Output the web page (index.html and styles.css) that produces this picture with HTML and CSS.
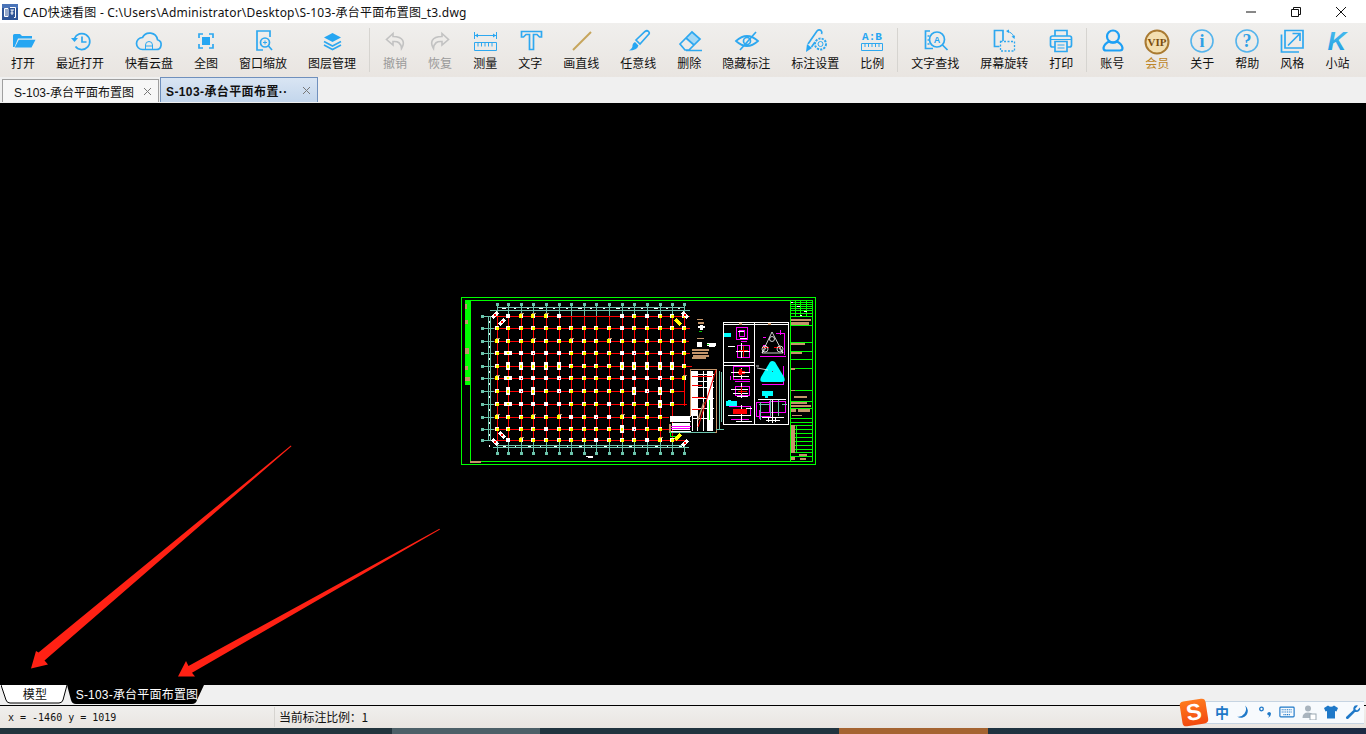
FILE: index.html
```html
<!DOCTYPE html>
<html lang="zh-CN">
<head>
  <meta charset="UTF-8" />
  <title>CAD快速看图</title>
  <link rel="stylesheet" href="styles.css">
</head>
<body>
  <div class="window">
    <!-- Title bar -->
    <div class="titlebar">
      <svg class="app-icon" viewBox="0 0 16 16">
        <rect width="16" height="16" fill="#2f5597"/>
        <rect x="0" y="0" width="16" height="4" fill="#4a74b8"/>
        <path d="M2.5 4.5h3.5v8H2.5z M4 4.5v8 M8 3.5h5.5v10H12 M8.5 6h3.5 M10 6v5 M8.5 9h3" fill="none" stroke="#fff" stroke-width="1"/>
      </svg>
      <span class="title-text">CAD快速看图 - C:\Users\Administrator\Desktop\S-103-承台平面布置图_t3.dwg</span>
      <div class="caption-btns">
        <div class="caption-btn"><svg viewBox="0 0 12 12"><path d="M1 6h10"/></svg></div>
        <div class="caption-btn"><svg viewBox="0 0 12 12"><path d="M1.5 3.5h7v7h-7z M3.5 3.5v-2h7v7h-2"/></svg></div>
        <div class="caption-btn"><svg viewBox="0 0 12 12"><path d="M1 1l10 10 M11 1L1 11"/></svg></div>
      </div>
    </div>

    <!-- Toolbar -->
    <div class="toolbar">
      <div class="tool">
        <svg class="icon" viewBox="0 0 28 28"><path class="solid" d="M4 20V8.5Q4 7 5.5 7H11l2 2h10v2.5H9L5.5 20z"/><path class="solid" d="M9.8 12.8H26.5L22.5 20.5H5.8z"/></svg>
        <span>打开</span>
      </div>
      <div class="tool">
        <svg class="icon" viewBox="0 0 28 28"><path class="bold" d="M8.4 11.5A8 8 0 1 1 9.5 19.5"/><path class="solid" d="M5 11h7l-3.500 4z"/><path class="bold" d="M16 9.500v5.500h4.500"/></svg>
        <span>最近打开</span>
      </div>
      <div class="tool">
        <svg class="icon" viewBox="0 0 28 28"><path class="bold" d="M7.500 22.500H21a5 5 0 0 0 1.500-9.800a8 8 0 0 0-15-2.200a6 6 0 0 0 0 12z"/><path d="M10.500 22v-4a3.500 3.500 0 0 1 7 0v4 M10.500 19h7"/></svg>
        <span>快看云盘</span>
      </div>
      <div class="tool">
        <svg class="icon" viewBox="0 0 28 28"><path class="bold" d="M7 11V7h4 M17 7h4v4 M21 17v4h-4 M11 21H7v-4"/><rect class="solid" x="10" y="10" width="8" height="8"/></svg>
        <span>全图</span>
      </div>
      <div class="tool">
        <svg class="icon" viewBox="0 0 28 28"><path class="bold" d="M21 10V4H8v19h6"/><circle class="bold" cx="16" cy="15.500" r="4.500"/><path d="M14 15.500h4 M16 13.500v4"/><path class="bold" d="M19.500 19l3.500 4"/></svg>
        <span>窗口缩放</span>
      </div>
      <div class="tool">
        <svg class="icon" viewBox="0 0 28 28"><path class="solid" d="M14.500 6L23 10.500 14.500 15 6 10.500z"/><path class="bold" d="M6 14.500l8.500 4.500 8.500-4.500 M6 18l8.500 4.500L23 18"/></svg>
        <span>图层管理</span>
      </div>
      <div class="tool-sep"></div>
      <div class="tool disabled">
        <svg class="icon grey" viewBox="0 0 28 28"><path d="M12 6.500L5.500 12.500 12 18V14.500C17 14 20 16 20.500 21.500C24 16 23 9.500 12 9.500z"/></svg>
        <span>撤销</span>
      </div>
      <div class="tool disabled">
        <svg class="icon grey" viewBox="0 0 28 28"><path d="M16 6.500L22.500 12.500 16 18V14.500C11 14 8 16 7.500 21.500C4 16 5 9.500 16 9.500z"/></svg>
        <span>恢复</span>
      </div>
      <div class="tool">
        <svg class="icon" viewBox="0 0 28 28"><path d="M3.500 5v7 M25.500 5v7 M4 8.500h21"/><path class="solid" d="M4 8.500l3-2v4z M25 8.500l-3-2v4z"/><path d="M3.500 15.500h22v8h-22z M7 15.500v4 M10.500 15.500v4 M14 15.500v4 M17.500 15.500v4 M21 15.500v4"/></svg>
        <span>测量</span>
      </div>
      <div class="tool">
        <svg class="icon" viewBox="0 0 28 28"><path class="bold" d="M5.500 4.500H25.500V10H23.500L21 7.500H17.500V22.500H13.500V7.500H10L7.500 10H5.500z"/></svg>
        <span>文字</span>
      </div>
      <div class="tool">
        <svg class="icon" viewBox="0 0 28 28"><path class="gold-line" d="M6 23L24 5"/></svg>
        <span>画直线</span>
      </div>
      <div class="tool">
        <svg class="icon" viewBox="0 0 28 28"><path class="bold" d="M12 13L21 4.500Q23 3 24.500 4.500Q26 6 24.500 7.500L16 17z"/><path class="solid" d="M11 15L14.500 18.500Q13 23.500 5 23.500Q9 21 8.500 18Q9 16 11 15z"/></svg>
        <span>任意线</span>
      </div>
      <div class="tool">
        <svg class="icon" viewBox="0 0 28 28"><path class="pale" d="M11 11L17 5L25 12L19 18z"/><path class="bold" d="M5 17L17 5L25 12L14 23H10z M11 11L19 18 M11 23.500H27"/></svg>
        <span>删除</span>
      </div>
      <div class="tool">
        <svg class="icon" viewBox="0 0 28 28"><path class="bold" d="M4 14Q15 4 26 14Q15 24 4 14z"/><circle class="bold" cx="15" cy="14" r="3.500"/><path class="bold" d="M8 23L24 5"/></svg>
        <span>隐藏标注</span>
      </div>
      <div class="tool">
        <svg class="icon" viewBox="0 0 28 28"><path class="solid" d="M5 25L6 17L11 21z"/><path class="bold" d="M7 17L16 4Q18 2 20 3.500Q21.500 5 20.500 7 M10.500 20L14 15"/><circle class="gear" cx="19.500" cy="17" r="5.500"/><circle cx="19.500" cy="17" r="2.500"/></svg>
        <span>标注设置</span>
      </div>
      <div class="tool">
        <svg class="icon" viewBox="0 0 28 28"><text class="icon-text" x="14" y="12.500" text-anchor="middle">A:B</text><path d="M3.500 16.500h21v7h-21z M7 16.500v3.500 M10.500 16.500v3.500 M14 16.500v3.500 M17.500 16.500v3.500 M21 16.500v3.500"/></svg>
        <span>比例</span>
      </div>
      <div class="tool-sep"></div>
      <div class="tool">
        <svg class="icon" viewBox="0 0 28 28"><path class="bold" d="M9 4H4.500V21.500H12 M6.500 9h2 M6.500 13h2 M6.500 17h2"/><circle class="bold" cx="16" cy="12.500" r="7.500"/><text class="icon-text small" x="16" y="16" text-anchor="middle">A</text><path class="bold" d="M21.500 18l5 5"/></svg>
        <span>文字查找</span>
      </div>
      <div class="tool">
        <svg class="icon" viewBox="0 0 28 28"><path class="bold" d="M9.500 19.500H4.500V3.500H13V14"/><path class="dashed" d="M10.500 14.500h14v9.500h-14z"/><path d="M17 4.500Q22 5 24 10"/><path class="solid" d="M24.500 12l-3-2.500 3.500-1z M16 4l3-1.500v3.500z"/></svg>
        <span>屏幕旋转</span>
      </div>
      <div class="tool">
        <svg class="icon" viewBox="0 0 28 28"><path class="bold" d="M8 9V3.500H20V9 M8 20H5.500Q3.500 20 3.500 18V11Q3.500 9 5.500 9H22.500Q24.500 9 24.500 11V18Q24.500 20 22.500 20H20"/><path class="bold" d="M8 14.500H20V24.500H8z"/><path d="M10.500 18h7 M10.500 21h7 M4 12.500h20"/></svg>
        <span>打印</span>
      </div>
      <div class="tool-sep"></div>
      <div class="tool">
        <svg class="icon user" viewBox="0 0 28 28"><circle cx="15" cy="9.500" r="6"/><path d="M5.500 21C6 17.500 9 15.500 11 14.500C13 16 17 16 19 14.500C21 15.500 24 17.500 24.500 21Q24.500 23.500 22 23.500H8Q5.500 23.500 5.500 21z"/></svg>
        <span>账号</span>
      </div>
      <div class="tool vip">
        <svg class="icon" viewBox="0 0 28 28"><circle class="vip-ring" cx="14" cy="15" r="11.500"/><text class="vip-text" x="14" y="18.500" text-anchor="middle">VIP</text></svg>
        <span>会员</span>
      </div>
      <div class="tool">
        <svg class="icon" viewBox="0 0 28 28"><circle class="soft" cx="14" cy="14" r="11"/><text class="circle-text" x="14" y="20" text-anchor="middle">i</text></svg>
        <span>关于</span>
      </div>
      <div class="tool">
        <svg class="icon" viewBox="0 0 28 28"><circle class="soft" cx="14" cy="14" r="11"/><text class="circle-text" x="14" y="20" text-anchor="middle">?</text></svg>
        <span>帮助</span>
      </div>
      <div class="tool">
        <svg class="icon" viewBox="0 0 28 28"><path class="bold" d="M7 3.500H25V21H7z M3.500 7.500V25H21"/><path class="bold" d="M10 18.500L21.500 7 M14.500 6.500H22V14"/></svg>
        <span>风格</span>
      </div>
      <div class="tool">
        <svg class="icon" viewBox="0 0 28 28">
          <defs><linearGradient id="kfill" x1="0" y1="0" x2="0" y2="1"><stop offset="0" stop-color="#4fc0f0"/><stop offset="1" stop-color="#1c9ae0"/></linearGradient></defs>
          <text class="k-text" x="14" y="23" text-anchor="middle" fill="url(#kfill)">K</text>
        </svg>
        <span>小站</span>
      </div>
    </div>

    <!-- Document tabs -->
    <div class="doc-tabs">
      <div class="doc-tab">
        <span>S-103-承台平面布置图</span>
        <svg class="tab-close" viewBox="0 0 9 9"><path d="M1 1l7 7 M8 1L1 8"/></svg>
      </div>
      <div class="doc-tab active">
        <span>S-103-承台平面布置··</span>
        <svg class="tab-close" viewBox="0 0 9 9"><path d="M1 1l7 7 M8 1L1 8"/></svg>
      </div>
    </div>

    <!-- Drawing area, coordinates are window pixels -->
    <div class="canvas">
      <svg class="sheet" viewBox="0 103 1366 582" width="1366" height="582">
        <g class="crisp">
          <!-- frames -->
          <path class="g" d="M461.500 297.500H815.500V464.500H461.500z M470.500 300.500H812.500V461.500H470.500z"/>
          <rect x="465" y="300" width="5" height="85" fill="#0f0"/>
          <path class="tan" d="M465 304h2v5h-2z M465 320h3v4h-3z M465 348h4v6h-4z M465 366h3v4h-3z M465 377h5v4h-5z M470 461h11v2h-11z"/>
        </g>
        <g id="grid" class="crisp"></g>
        <g class="crisp">
          <!-- notes between plan and details -->
          <path class="tan" d="M697 319h6v1h-6z M698 322h6v2h-6z M692 349h17v2h-17z M692 352h16v2h-16z M693 355h16v2h-16z M692 357h14v2h-14z M697 338h7v1h-7z"/>
          <path class="w" d="M700 325h3v5h-3z M698 326h7v2h-7z M697 342h5v5h-5z M707 343h9v3h-9z M709 346h6v1h-6z"/>
          <path class="gr" d="M699 331h3v1h-3z M707 344h2v1h-2z"/>

          <!-- stair block -->
          <rect x="690" y="369" width="27" height="64" fill="#000"/>
          <path class="tan" d="M690 369h27v1h-27z M690 370h1v46h-1z M716 370h1v62h-1z M690 432h27v1h-27z"/>
          <path class="wl" d="M692 374.500H714 M692 381.500H714 M692 387.500H714 M692 398.500H714 M692 408.500H714 M692 418.500H714 M692 371V431 M697.500 371V431 M703.500 371V431 M712.500 371V431 M669.500 416.500H691 M669.500 421.500H691 M669.500 431.500H691"/>
          <path class="w" d="M691 371h6v45h-6z M707 371h5v60h-5z"/>
          <path class="rl" d="M692 376.500H712 M692 385.500H702 M692 397.500H705 M692 409.500H700"/>
          <path class="tl" d="M719.500 371V429 M721.500 372V422 M669 432.500H715 M716 429.500H724"/>
          <path class="gl" d="M670.500 425V437 M670 436.500H676 M709.500 400V420"/>
          <rect x="670" y="417" width="20" height="4" fill="#fff"/>
          <rect x="672" y="423" width="18" height="7" fill="#fff"/>
          <path class="ml" d="M671 426.500H691 M671 428.500H690"/>
          <rect x="669" y="424" width="2" height="8" fill="#c4956a"/>
        </g>
        <path class="red-thin" d="M716 370L698 427"/>
        <path class="tan-thin" d="M704 402L698 420"/>

        <g class="crisp">
          <!-- detail panel -->
          <path class="w" d="M723 322h66v1h-66z M723 324h66v1h-66z M723 322h1v103h-1z M788 322h1v103h-1z M723 424h66v1h-66z M754 322h1v103h-1z M723 362h32v1h-32z M723 365h32v1h-32z"/>
          <path class="c" d="M724 333h7v4h-7z M726 401h11v5h-11z M728 400h3v2h-3z M762 391h11v5h-11z M765 395h3v3h-3z"/>
          <path class="tan" d="M739 323h3v2h-3z M768 323h3v2h-3z"/>
          <path class="ml" d="M736.500 327.500h11v12h-11z M739.500 330.500h5v6h-5z M737.500 345.500h12v12h-12z M733 372.500h16v-6h-16z M733.500 367v12.500h16.500 M735 386.500h14v9h-14z M729 406.500h21v8 M731 419.500h18 M760 356.500h26 M784.500 333v22 M776 333h9 M762 384.500h22 M783.500 366v18 M756.500 402.500h14v14h-14z M769.500 401.500h16v11h-16z M759 410v9 M760.500 412.500h24 M741 341.500h6 M735 381.500h15 M730 376v4 M763 337h3 M763 345h3 M780 330v5"/>
          <path class="wl" d="M738 331.500h6 M740 338.500h7 M728 346.500h7 M736 351.500h14 M741.500 343v15 M731 372.500h19 M741.500 368v11 M731 389.500h17 M737 396.500h11 M741.500 383v15 M728 415.500h23 M741.500 405v16 M736 421.500h16 M758 399.500h28 M772.500 399v24 M762 417.500h22 M766 420.500h14 M733 393.500h15 M746 408.500h6 M733 376.500h16 M775 418v4 M768 418v4"/>
          <path class="rl" d="M739 350.500h9 M743.500 346v11 M738 373.500h7 M738 371.500h7 M738 391.500h9 M741.500 387v7 M762 347.500h7 M774 347.500h7"/>
          <rect x="733" y="409" width="14" height="5" fill="#f00"/>
          <rect x="739" y="369" width="3" height="6" fill="#f00"/>
          <path class="tl" d="M759 404.500h12 M760.500 402V420 M770.500 400V416 M778.500 400V416 M782 404.500h5"/>
        </g>
        <path class="wire" d="M772 332L762 353H783z M762 353l4 -5 M783 353l-4 -5"/>
        <circle class="wire" cx="765" cy="349" r="3"/>
        <circle class="wire" cx="780" cy="349" r="3"/>
        <circle class="wire" cx="772" cy="339" r="2.500"/>
        <path class="cyan-fill" d="M770 362Q772 360 775 362L784 377Q786 382 782 382H763Q759 382 761 377z"/>
        <path class="dark-mark" d="M772 371h1v1h-1z"/>
        <path class="wire" d="M757 368L768 370 M756 366h3"/>

        <g class="crisp">
          <!-- title block -->
          <path class="gl" d="M790.500 300V461.500 M790.500 302.500H812 M790.500 304.500H812 M790.500 306.500H812 M790.500 308.500H812 M790.500 310.500H812 M790.500 313.500H812 M790.500 316.500H812 M795.500 301V317 M800.500 301V317 M806.500 301V317 M790.500 325.500H812 M790.500 342.500H812 M790.500 351.500H812 M790.500 359.500H812 M790.500 368.500H812 M790.500 390.500H812 M790.500 401.500H812 M790.500 408.500H812 M790.500 418.500H812 M790.500 422.500H812 M790.500 425.500H812 M796.500 425V452 M790.500 429.500H812 M790.500 433.500H812 M790.500 437.500H812 M790.500 441.500H812 M790.500 445.500H812 M790.500 449.500H812 M790.500 452.500H812 M790.500 456.500H812"/>
          <path class="tan" d="M791 319h20v2h-20z M791 322h18v3h-18z M791 343h14v2h-14z M791 352h11v2h-11z M791 368h4v2h-4z M791 390h4v1h-4z M794 396h13v2h-13z M791 402h16v2h-16z M791 405h20v2h-20z M791 409h5v3h-5z M798 409h12v3h-12z M792 415h10v1h-10z M791 425h4v28h-4z M799 454h8v2h-8z M791 457h4v3h-4z M800 458h6v2h-6z"/>
          <path class="w" d="M791 302h2v1h-2z M797 306h3v1h-3z M804 311h3v1h-3z M800 315h2v1h-2z"/>
        </g>

        <!-- annotation arrows -->
        <path class="arrow" d="M291.500 446.300L290.800 445.600L38.500 652.500L36 651L31 668.500L48 664.500L44.500 660.500z"/>
        <path class="arrow" d="M440 529.600L439.400 528.800L188.500 666L186 661L178 676.500L195 676.500L192 672.800z"/>
      </svg>
    </div>

    <!-- Sheet tabs -->
    <div class="sheet-tabs">
      <div class="sheet-tab model">
        <svg class="tab-shape" viewBox="0 0 66 20" preserveAspectRatio="none"><path d="M0 0L5 15Q6 18 9 18H58Q61 18 62 15L66 0" fill="#fff" stroke="#000"/></svg>
        <span>模型</span>
      </div>
      <div class="sheet-tab layout">
        <svg class="tab-shape" viewBox="0 0 137 20" preserveAspectRatio="none"><path d="M0 0L4 15Q5 19 9 19H125Q129 19 130 15L137 0z" fill="#000"/></svg>
        <span>S-103-承台平面布置图</span>
      </div>
    </div>

    <!-- Status bar -->
    <div class="statusbar">
      <div class="coords">x = -1460 y = 1019</div>
      <div class="scale">当前标注比例：1</div>
    </div>

    <!-- Desktop peeking out under the window -->
    <div class="desktop">
      <div class="seg-a"></div>
      <div class="seg-b"></div>
      <div class="seg-c"></div>
      <div class="seg-d"></div>
      <div class="seg-e"></div>
    </div>

    <!-- Sogou input method bar, floats over the window -->
    <div class="ime">
      <div class="ime-logo"><span>S</span></div>
      <div class="ime-bar">
        <span class="ime-zh">中</span>
        <svg viewBox="0 0 16 16"><path class="ime-solid" d="M10 1.500A6.500 6.500 0 0 1 2 12.500A7.500 7.500 0 0 0 10 1.500z"/></svg>
        <svg viewBox="0 0 16 16"><circle class="ime-line" cx="4.500" cy="5" r="1.800"/><path class="ime-solid" d="M11 8.500a1.800 1.800 0 0 1 3 1.200Q14 12.500 11 14Q12.500 12 11.800 11.300A1.500 1.500 0 0 1 11 8.500z"/></svg>
        <svg viewBox="0 0 18 16"><rect class="ime-line" x="1" y="2.500" width="16" height="11" rx="1"/><path class="ime-dots" d="M3 5.500h12 M3 8h12 M5 11h8"/></svg>
        <svg viewBox="0 0 16 16"><circle class="ime-grey" cx="7" cy="4.500" r="3"/><path class="ime-grey" d="M1.500 14Q1.500 8.500 7 8.500Q11 8.500 12 11V14z"/><rect x="9" y="10" width="6" height="6" fill="#fff" stroke="#9aa7b2"/></svg>
        <svg viewBox="0 0 16 16"><path class="ime-solid" d="M5 1.500L1 4l1.500 3.500L4 7v7.500h8V7l1.500.5L15 4l-4-2.500Q8 4 5 1.500z"/></svg>
        <svg viewBox="0 0 16 16"><path class="ime-solid" d="M15 3.500L12 6.500 10 5l3-3.500Q9.500.5 8.500 3.500Q8 5 8.500 6L1 13Q.5 15 3 15L10 8Q13 8.500 14.500 6.500Q15.500 5 15 3.500z"/></svg>
      </div>
    </div>
  </div>
  <script src="drawing.js"></script>
</body>
</html>
```

FILE: styles.css
```css
* {
  box-sizing: border-box;
}

html, body {
  margin: 0;
  height: 100%;
  overflow: hidden;
}

body {
  font-family: "Noto Sans CJK SC", "Noto Sans", sans-serif;
  font-size: 12px;
  color: #111;
  background: #000;
}

.window {
  position: relative;
  display: flex;
  flex-direction: column;
  width: 1366px;
  height: 734px;
}

/* title bar */
.titlebar {
  display: flex;
  align-items: center;
  height: 23px;
  padding-left: 2px;
  background: #fff;
}

.app-icon {
  width: 16px;
  height: 16px;
}

.title-text {
  margin-left: 5px;
  font-family: "Noto Sans", "Noto Sans CJK SC", sans-serif;
  font-size: 12px;
  letter-spacing: 0.22px;
  white-space: nowrap;
}

.caption-btns {
  display: flex;
  margin-left: auto;
  margin-right: 3px;
}

.caption-btn {
  display: flex;
  align-items: center;
  justify-content: center;
  width: 45px;
  height: 21px;
}

.caption-btn svg {
  width: 12px;
  height: 12px;
  fill: none;
  stroke: #111;
  stroke-width: 1;
}

/* toolbar */
.toolbar {
  display: flex;
  height: 54px;
  padding: 4px 0 0 0.5px;
  background: linear-gradient(#f0efed, #e9e5e1);
}

.tool {
  display: flex;
  flex-direction: column;
  align-items: center;
  padding: 0 10.5px;
  white-space: nowrap;
}

.tool span {
  height: 16px;
  line-height: 16px;
}

.tool.disabled span {
  color: #9a9a9a;
}

.tool.vip span {
  color: #bd8527;
}

.tool-sep {
  width: 1px;
  height: 44px;
  margin: 1px 2.5px 0;
  background: #d6d4d0;
}

.icon {
  width: 28px;
  height: 28px;
  margin: 0 -2px;
  flex: none;
  fill: none;
  stroke: #2ea8f0;
  stroke-width: 1;
}

.icon .solid {
  fill: #26a6f2;
  stroke: none;
}

.icon .bold {
  stroke-width: 1.7;
}

.icon .pale {
  fill: #a5d8f5;
  stroke: none;
}

.icon .dashed {
  stroke-dasharray: 2 1.5;
  stroke-width: 1.3;
}

.icon .gear {
  stroke-width: 2;
  stroke-dasharray: 2.2 1.1;
}

.icon .soft {
  stroke: #55b4ec;
  stroke-width: 1.6;
}

.icon .gold-line {
  stroke: #c6a55c;
  stroke-width: 2;
}

.icon.grey {
  stroke: #c2c2c2;
  stroke-width: 1.6;
}

.icon.user {
  stroke: #1ea0f5;
  stroke-width: 2.2;
}

.icon-text {
  font-family: "Liberation Mono", monospace;
  font-size: 11px;
  font-weight: bold;
  fill: #26a6f2;
  stroke: none;
}

.icon-text.small {
  font-family: "Liberation Sans", sans-serif;
  font-size: 9px;
}

.circle-text {
  font-family: "Liberation Serif", serif;
  font-size: 18px;
  font-weight: bold;
  fill: #2ea0e6;
  stroke: none;
}

.vip-ring {
  fill: #f3dfb0;
  stroke: #a97a32;
  stroke-width: 2;
}

.vip-text {
  font-family: "Liberation Serif", serif;
  font-size: 11px;
  font-weight: bold;
  fill: #7a4d0e;
  stroke: none;
}

.k-text {
  font-family: "Liberation Sans", sans-serif;
  font-size: 26px;
  font-weight: bold;
  font-style: italic;
  stroke: none;
}

/* document tabs */
.doc-tabs {
  display: flex;
  align-items: flex-end;
  gap: 1px;
  height: 26px;
  padding-left: 2px;
  padding-bottom: 1px;
  background: #f0f0f0;
}

.doc-tab {
  display: flex;
  align-items: center;
  justify-content: space-between;
  width: 157px;
  height: 23px;
  padding: 0 6px 0 11px;
  font-family: "Liberation Sans", "Noto Sans CJK SC", sans-serif;
  background: #f7f7f7;
  border: 1px solid #a0a0a0;
  border-bottom: none;
  white-space: nowrap;
}

.doc-tab.active {
  width: 158px;
  height: 25px;
  padding-left: 5px;
  font-weight: bold;
  letter-spacing: 0.4px;
  background: linear-gradient(#d9e5f3, #c3d6ec);
  border-color: #6f90bd;
}

.tab-close {
  width: 9px;
  height: 9px;
  flex: none;
  fill: none;
  stroke: #777;
  stroke-width: 1;
}

/* drawing */
.canvas {
  flex: 1;
  background: #000;
  overflow: hidden;
}

.sheet {
  display: block;
}

.crisp {
  shape-rendering: crispEdges;
}

.g {
  fill: none;
  stroke: #0f0;
}

.gl {
  fill: none;
  stroke: #0f0;
  stroke-width: 1;
}

.tan {
  fill: #c4956a;
}

.w {
  fill: #fff;
}

.gr {
  fill: #0c0;
}

.c {
  fill: #0ff;
}

.wl {
  fill: none;
  stroke: #fff;
}

.rl {
  fill: none;
  stroke: #f00;
}

.tl {
  fill: none;
  stroke: #6cc4ac;
}

.ml {
  fill: none;
  stroke: #f0f;
}

.wire {
  fill: none;
  stroke: #fff;
  stroke-width: 0.8;
}

.red-thin {
  stroke: #f00;
  stroke-width: 1;
}

.tan-thin {
  stroke: #c4956a;
  stroke-width: 1.5;
}

.cyan-fill {
  fill: #0ff;
}

.dark-mark {
  fill: #555;
}

.arrow {
  fill: #ff2114;
}

/* sheet tabs */
.sheet-tabs {
  display: flex;
  height: 21px;
  padding-left: 1px;
  background: #f0f0f0;
  border-bottom: 1px solid #000;
}

.sheet-tab {
  position: relative;
  display: flex;
  align-items: center;
  justify-content: center;
  height: 20px;
  padding-bottom: 3px;
}

.sheet-tab.model {
  width: 66px;
  padding-left: 2px;
}

.sheet-tab.layout {
  width: 137px;
  padding-left: 3px;
  color: #fff;
}

.sheet-tab span {
  position: relative;
  font-family: "Liberation Sans", "Noto Sans CJK SC", sans-serif;
  letter-spacing: 0.2px;
  white-space: nowrap;
}

.tab-shape {
  position: absolute;
  top: 0;
  left: 0;
  width: 100%;
  height: 100%;
}

/* status bar */
.statusbar {
  display: flex;
  align-items: center;
  height: 22px;
  padding-left: 8px;
  background: linear-gradient(#f0efed, #e9e5e1);
}

.coords {
  width: 266px;
  font-family: "DejaVu Sans Mono", monospace;
  font-size: 10px;
}

.scale {
  height: 20px;
  padding-left: 4px;
  line-height: 20px;
  letter-spacing: -0.2px;
  border-left: 1px solid #d6d4d0;
}

/* desktop strip */
.desktop {
  display: flex;
  height: 6px;
}

.seg-a { width: 392px; background: #22343d; }
.seg-b { width: 148px; background: #4d6068; }
.seg-c { width: 299px; background: #21343f; }
.seg-d { width: 149px; background: #a56431; }
.seg-e { flex: 1; background: linear-gradient(90deg, #1f3340, #1c2a44); }

/* input method bar */
.ime {
  position: absolute;
  left: 1180px;
  top: 698px;
  display: flex;
  align-items: center;
  width: 186px;
  height: 28px;
}

.ime-logo {
  position: relative;
  z-index: 1;
  display: flex;
  align-items: center;
  justify-content: center;
  flex: none;
  width: 26px;
  height: 25px;
  margin-left: 1px;
  font-family: "Liberation Sans", sans-serif;
  font-size: 23px;
  font-weight: bold;
  line-height: 1;
  color: #fff;
  background: linear-gradient(#ff7a1f, #f24a0f);
  border-radius: 4px;
  transform: rotate(-9deg);
}

.ime-bar {
  display: flex;
  align-items: center;
  gap: 6px;
  width: 159px;
  height: 23px;
  margin-left: -2px;
  padding-left: 9px;
  background: #f7fafd;
  border: 1px solid #c6d4e2;
  border-right: none;
}

.ime-bar svg {
  width: 16px;
  height: 16px;
  flex: none;
}

.ime-zh {
  font-size: 14px;
  font-weight: bold;
  line-height: 1;
  color: #1e78c8;
}

.ime-solid {
  fill: #1e78c8;
}

.ime-line {
  fill: none;
  stroke: #1e78c8;
  stroke-width: 1.3;
}

.ime-dots {
  fill: none;
  stroke: #1e78c8;
  stroke-width: 1.3;
  stroke-dasharray: 1.2 0.8;
}

.ime-grey {
  fill: #a9b4be;
}
```

FILE: drawing.js
```js
// Column grid of the foundation plan. Everything is in window pixels.
var xs = [497, 508, 521, 533, 546, 559, 571, 584, 596, 609, 622, 634, 647, 660, 672, 684];
var ys = [316, 328, 341, 353, 366, 378, 391, 404, 417, 429, 440];

// one char per column: . none, y yellow, c yellow with tan, w white, o white with dot,
// t tall white, h wide white
var rows = [
  '.wcccw....wywyyy',
  'yyyyyyyyyywyyyyy',
  'cyycyycyycyyyyyy',
  'yhwowwyyyywoywyy',
  'ytttttyyyyttttty',
  'chowwoyyyywwwoyc',
  'ytotyoyyyyytoty.',
  'yhwwwwyyywyyyty.',
  'cyycycwyowcyyy..',
  'yyyywyyyyytoyy..',
  '.wcyyyyywyyywcy.'
];

var hEnds = [690, 690, 689, 690, 692, 686, 685, 687, 669, 669, 685];

function el(tag, attrs) {
  var node = document.createElementNS('http://www.w3.org/2000/svg', tag);
  for (var k in attrs) node.setAttribute(k, attrs[k]);
  document.getElementById('grid').appendChild(node);
}

function box(x, y, w, h, fill) {
  el('rect', { x: x, y: y, width: w, height: h, fill: fill });
}

var teal = '#6cc4ac';

// axis lines and bubbles
box(497, 307, 187, 1, teal);
box(490, 310, 200, 1, teal);
box(497, 445, 187, 1, teal);
box(493, 447, 196, 1, teal);
box(488, 316, 1, 124, teal);
box(490, 316, 1, 124, teal);

xs.forEach(function (x) {
  box(x, 304, 1, 12, teal);
  box(x - 1, 303, 3, 3, teal);
  box(x, 441, 1, 12, teal);
  box(x - 1, 452, 3, 3, teal);
});

ys.forEach(function (y) {
  box(482, y, 15, 1, teal);
  box(481, y - 1, 3, 3, teal);
  box(489, y + 5, 1, 2, '#fff');
});

// white marks along the dimension lines
[502, 514, 527, 539, 553, 566, 578, 590, 603, 616, 628, 641, 654, 666, 678].forEach(function (x, i) {
  box(x, 308, i % 3 === 0 ? 4 : 2, 1, '#fff');
  box(x + 1, 446, i % 2 === 0 ? 3 : 1, 1, '#fff');
});
box(586, 456, 7, 1, '#fff');
box(588, 457, 5, 1, '#fff');

// red beams
ys.forEach(function (y, i) {
  box(494, y, hEnds[i] - 494, 1, '#f00');
});
xs.forEach(function (x, i) {
  box(x, 316, 1, i === 15 ? 90 : 125, '#f00');
});

// column bases
rows.forEach(function (row, r) {
  var y = ys[r];
  row.split('').forEach(function (kind, c) {
    var x = xs[c];
    if (kind === 'y') {
      box(x - 2, y - 2, 4, 4, '#fff');
      box(x - 1, y - 1, 3, 3, '#ff0');
    } else if (kind === 'c') {
      box(x - 2, y - 2, 4, 4, '#ff0');
      box(x - 1, y - 3, 4, 1, '#c4956a');
      box(x + 1, y - 2, 1, 4, '#fff');
    } else if (kind === 'w') {
      box(x - 2, y - 2, 4, 4, '#fff');
    } else if (kind === 'o') {
      box(x - 2, y - 2, 4, 4, '#fff');
      box(x, y, 1, 1, '#c00');
    } else if (kind === 't') {
      box(x - 2, y - 4, 4, 8, '#fff');
      box(x - 1, y - 1, 2, 3, '#ff0');
    } else if (kind === 'h') {
      box(x - 4, y - 2, 8, 4, '#fff');
      box(x - 1, y - 1, 2, 2, '#ff0');
    }
  });
});

// corner pile groups
function corner(cx, cy, deg, color) {
  el('rect', {
    x: cx - 4, y: cy - 2, width: 8, height: 4, fill: color,
    transform: 'rotate(' + deg + ' ' + cx + ' ' + cy + ')'
  });
  el('rect', {
    x: cx - 1, y: cy - 1, width: 2, height: 2, fill: color === '#fff' ? '#f00' : '#ff0',
    transform: 'rotate(' + deg + ' ' + cx + ' ' + cy + ')'
  });
}
corner(495, 315, -45, '#fff');
corner(502, 322, -45, '#fff');
corner(495, 442, 45, '#fff');
corner(502, 435, 45, '#fff');
corner(685, 315, 45, '#fff');
corner(678, 322, 45, '#ff0');
corner(685, 443, -45, '#fff');
corner(678, 437, -45, '#ff0');
```
